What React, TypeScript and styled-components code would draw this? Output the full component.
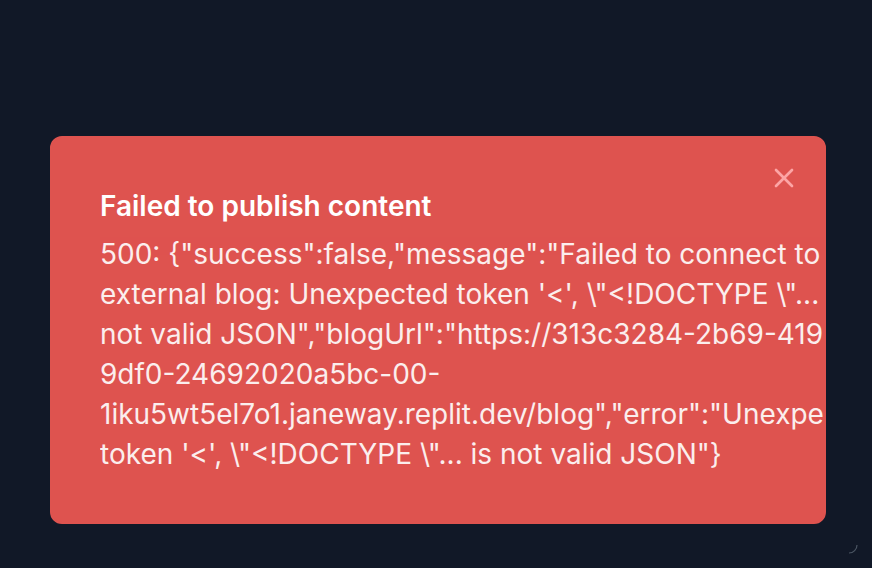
import React from 'react'
import styled, { createGlobalStyle } from 'styled-components'

const GlobalStyle = createGlobalStyle`
    html, body {
        margin: 0;
        padding: 0;
        background: #111827;
        font-family: Inter, "Noto Sans", sans-serif;
    }
`

const Screen = styled.div`
    position: relative;
    width: 872px;
    height: 568px;
    background: #111827;
    padding: 136px 46px 0 50px;
    box-sizing: border-box;
`

const Toast = styled.div`
    position: relative;
    display: flex;
    align-items: center;
    justify-content: space-between;
    width: 776px;
    box-sizing: border-box;
    background: #de534f;
    border: 2px solid #de534f;
    border-radius: 12px;
    padding: 48px 64px 48px 48px;
    color: #ffffff;
    overflow: hidden;
`

const Content = styled.div`
    display: grid;
    gap: 8px;
`

const Title = styled.div`
    font-size: 28px;
    line-height: 40px;
    font-weight: 600;
`

const Description = styled.div`
    font-size: 28px;
    line-height: 40px;
    opacity: 0.9;
`

const CloseButton = styled.button`
    position: absolute;
    top: 16px;
    right: 16px;
    padding: 8px;
    border: none;
    border-radius: 12px;
    background: transparent;
    color: #fca5a5;
    display: flex;
    align-items: center;
    justify-content: center;
`

const Spinner = styled.svg`
    position: absolute;
    right: 14px;
    bottom: 14px;
`

const message = `500: {"success":false,"message":"Failed to connect to external blog: Unexpected token '<', \\"<!DOCTYPE \\"... is not valid JSON","blogUrl":"https://313c3284-2b69-4195-9df0-24692020a5bc-00-1iku5wt5el7o1.janeway.replit.dev/blog","error":"Unexpected token '<', \\"<!DOCTYPE \\"... is not valid JSON"}`

const App = () => {
    return (
        <>
            <GlobalStyle />
            <Screen>
                <Toast>
                    <Content>
                        <Title>Failed to publish content</Title>
                        <Description>{message}</Description>
                    </Content>
                    <CloseButton aria-label="Close">
                        <svg width="32" height="32" viewBox="0 0 24 24" fill="none" stroke="currentColor" strokeWidth="2" strokeLinecap="round" strokeLinejoin="round">
                            <path d="M18 6 6 18" />
                            <path d="m6 6 12 12" />
                        </svg>
                    </CloseButton>
                </Toast>
                <Spinner width="10" height="10" viewBox="0 0 10 10" fill="none">
                    <path d="M9 1 A 8 8 0 0 1 1 9" stroke="#4b5563" strokeWidth="1.2" />
                </Spinner>
            </Screen>
        </>
    )
}

export default App
